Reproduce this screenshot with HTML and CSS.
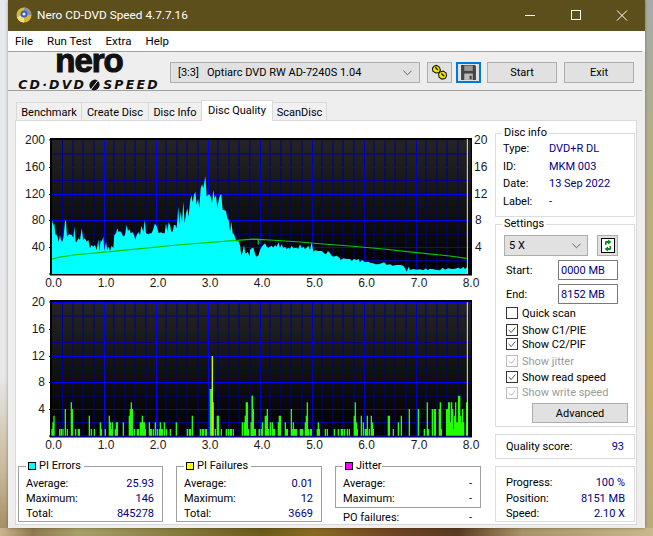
FILE: index.html
```html
<!DOCTYPE html>
<html lang="en">
<head>
<meta charset="utf-8">
<title>Nero CD-DVD Speed 4.7.7.16</title>
<link rel="stylesheet" href="styles.css">
</head>
<body>
<div class="window">
  <header class="titlebar">
    <svg class="app-icon" viewBox="0 0 16 16"><circle cx="8" cy="8" r="7.5" fill="#d8b83a"/><path d="M8 .5A7.5 7.5 0 0 1 15.5 8H8z" fill="#8a8fb0"/><path d="M1 10a7.5 7.5 0 0 0 7 5.500V8z" fill="#f0e080"/><circle cx="8" cy="7" r="3.500" fill="#3a62b0"/><circle cx="8" cy="7" r="1.500" fill="#e8e8e8"/></svg>
    <span class="title-text">Nero CD-DVD Speed 4.7.7.16</span>
    <div class="win-controls">
      <svg class="win-btn" viewBox="0 0 46 31"><path d="M18 15.500h10" stroke="#fff" fill="none"/></svg>
      <svg class="win-btn" viewBox="0 0 46 31"><rect x="18.500" y="10.500" width="9" height="9" stroke="#fff" fill="none"/></svg>
      <svg class="win-btn" viewBox="0 0 46 31"><path d="M18 10.500l10 10M28 10.500l-10 10" stroke="#fff" fill="none"/></svg>
    </div>
  </header>
  <nav class="menubar"><span>File</span><span>Run Test</span><span>Extra</span><span>Help</span></nav>
  <div class="toolbar">
    <div class="logo">
      <div class="logo-nero">nero</div>
      <div class="logo-speed"><span>CD·DVD</span><svg class="swoosh" viewBox="0 0 15 12"><ellipse cx="7.500" cy="6" rx="5" ry="5.500" transform="rotate(28 7.500 6)" fill="#111"/><path d="M4 10.500L11 1.500" stroke="#eee" stroke-width="1"/></svg><span>SPEED</span></div>
    </div>
    <div class="combo drive"><span class="combo-text">[3:3]&nbsp;&nbsp;&nbsp;Optiarc DVD RW AD-7240S 1.04</span><svg class="chev" viewBox="0 0 10 6"><path d="M.5.5L5 5 9.500.5" fill="none" stroke="#555"/></svg></div>
    <button class="btn icon-btn"><svg viewBox="0 0 18 18" class="ico"><g fill="#f2e600" stroke="#111" stroke-width="1.100"><path d="M3 2.500l3-1 3 2 1 3-1.500 2.500-3.500.5-3-2-.5-3z"/><path d="M9.500 8.500l3.500-1 3 2 .5 3-1.500 3-3.500.5-3-2-.5-3.500z"/></g><path d="M4.500 3.500l3 3M11 10l3 3" stroke="#111" stroke-width="1.400"/></svg></button>
    <button class="btn icon-btn focus"><svg viewBox="0 0 16 16" class="ico"><path d="M1 1h13l1 1v13H1z" fill="#444"/><rect x="4" y="1.500" width="8" height="5" fill="#999"/><rect x="4" y="9" width="8" height="6" fill="#bbb"/><rect x="9" y="11" width="2" height="3.500" fill="#444"/></svg></button>
    <button class="btn text-btn">Start</button>
    <button class="btn text-btn exit">Exit</button>
  </div>
  <div class="tabs">
    <span class="tab t1">Benchmark</span><span class="tab t2">Create Disc</span><span class="tab t3">Disc Info</span><span class="tab active">Disc Quality</span><span class="tab t5">ScanDisc</span>
  </div>
  <main class="panel">
    <section class="left">
      <svg class="chart first" viewBox="18 130 477 162">
        <defs>
          <linearGradient id="plotbg" x1="0" y1="0" x2="0" y2="1"><stop offset="0" stop-color="#242424"/><stop offset="1" stop-color="#000"/></linearGradient>
          <g id="plot">
            <rect x="50" y="138" width="422" height="137.500" fill="#000"/>
            <rect x="52" y="140" width="419" height="134" fill="url(#plotbg)"/>
            <path class="gminor" d="M62.500 140V274M73 140V274M83 140V274M94 140V274M114 140V274M125 140V274M135 140V274M146 140V274M166 140V274M177 140V274M187 140V274M198 140V274M218 140V274M229 140V274M239 140V274M250 140V274M270 140V274M281 140V274M291 140V274M302 140V274M322 140V274M333 140V274M343 140V274M354 140V274M374 140V274M385 140V274M395 140V274M406 140V274M426 140V274M437 140V274M447 140V274M458 140V274M52 154H469M52 180.500H469M52 207.500H469M52 234H469M52 260.500H469"/>
            <path class="gmid" d="M260.500 140V274M312.500 140V274M364.500 140V274M416.500 140V274"/>
            <path class="gmajor" d="M104.500 140V274M156.500 140V274M208.500 140V274M52 167.500H469M52 194.500H469M52 220.500H469M52 247.500H469"/>
            <path class="ticks" d="M49 140h3M49 167.500h3M49 194.500h3M49 220.500h3M49 247.500h3M49 274h3"/>
          </g>
        </defs>
        <use href="#plot"/>
        <g transform="matrix(.33333 0 0 .33333 10 125)">
          <path class="cyan" d="M126 447V285L130 300 133 297 136 328 140 330 143 335 146 352 150 330 153 345 157 350 160 340 165 290 168 285 171 335 175 330 178 328 185 330 190 338 193 305 197 350 200 352 205 340 210 345 215 310 220 345 225 340 230 350 235 345 240 370 245 360 250 365 255 360 260 375 265 342 268 380 272 345 275 350 280 335 283 378 288 350 292 375 296 365 300 378 305 362 310 370 313 330 318 325 322 310 326 322 330 318 335 325 340 335 345 330 350 300 354 318 358 312 362 325 368 322 372 330 376 345 380 330 385 322 390 330 394 302 400 320 404 285 408 325 415 328 420 325 425 325 430 312 434 297 438 300 442 310 446 325 452 322 458 325 464 325 468 295 472 320 476 292 480 300 484 320 488 320 492 300 496 300 500 310 505 245 508 300 512 260 516 290 520 230 524 295 528 265 532 250 536 275 540 230 544 210 548 232 552 210 556 200 560 240 564 220 568 250 572 192 576 178 580 190 586 153 590 215 594 210 598 208 602 215 606 235 610 195 614 220 618 210 622 250 626 225 630 210 634 208 638 255 642 255 648 258 652 280 656 285 660 320 664 290 668 325 672 328 676 340 680 350 684 345 690 360 694 392 698 380 702 360 706 385 710 385 714 380 718 395 722 378 726 380 730 370 734 385 738 395 742 398 746 392 750 392V447Z"/>
          <path class="speed" d="M126 402L145 397 190 390 300 380 400 370 500 360 600 352 680 346 720 343 745 343V358M745 343H750"/>
        </g>
        <g transform="matrix(.33333 0 0 .33333 250 125)">
          <path class="cyan" d="M0 447V375L5 370 10 368 14 385 18 395 25 392 30 375 35 365 40 360 45 355 50 365 55 368 60 365 65 362 70 368 75 360 80 365 85 352 90 368 95 358 100 370 105 365 110 372 115 368 120 372 125 362 130 370 140 368 145 372 150 358 155 370 160 365 165 372 170 368 175 362 180 375 185 350 190 380 195 376 205 378 215 378 222 385 228 388 234 378 240 385 245 392 250 395 260 392 268 398 272 405 280 400 290 402 300 402 305 408 312 402 320 405 326 402 330 412 336 405 345 412 355 410 362 414 370 415 376 418 385 418 395 415 402 412 410 420 420 418 428 422 440 420 450 420 460 422 466 432 470 440 476 425 480 435 490 432 500 434 510 433 520 436 528 430 532 436 540 431 550 433 560 435 570 436 578 428 585 434 595 430 605 432 615 431 625 428 632 432 640 426 645 432 652 426V447Z"/>
          <path class="speed" d="M0 343H25V358M25 343L60 345 150 351 220 357 300 363 400 372 500 383 600 393 650 400"/>
          <path class="cursor" d="M652 42V447"/>
        </g>
        <g class="axis end">
          <text x="45" y="143.500">200</text><text x="45" y="170.500">160</text><text x="45" y="197.500">120</text><text x="45" y="223.500">80</text><text x="45" y="250.500">40</text>
        </g>
        <g class="axis">
          <text x="474" y="143.500">20</text><text x="474" y="170.500">16</text><text x="474" y="197.500">12</text><text x="475" y="223.500">8</text><text x="475" y="250.500">4</text>
        </g>
        <g class="axis mid">
          <text x="53.500" y="287">0.0</text><text x="106" y="287">1.0</text><text x="158" y="287">2.0</text><text x="210" y="287">3.0</text><text x="262" y="287">4.0</text><text x="314.500" y="287">5.0</text><text x="366.500" y="287">6.0</text><text x="419" y="287">7.0</text><text x="471" y="287">8.0</text>
        </g>
      </svg>
      <svg class="chart" viewBox="18 292 477 162">
        <use href="#plot" transform="translate(0 162)"/>
        <path class="gmajor" d="M52 302.500H469M52 436H469"/>
        <g transform="matrix(.33333 0 0 .33333 10 290)">
          <path class="bars" d="M126 437v-20M129 437v-40M132 437v-60M149 437v-20M154 437v-20M159 437v-20M166 437v-80M172 437v-20M184 437v-100M187 437v-80M197 437v-20M205 437v-20M208 437v-20M238 437v-60M244 437v-20M253 437v-20M271 437v-40M274 437v-20M286 437v-20M298 437v-60M301 437v-40M304 437v-20M307 437v-40M316 437v-20M319 437v-40M322 437v-40M340 437v-40M358 437v-60M361 437v-80M364 437v-100M367 437v-80M373 437v-20M382 437v-20M385 437v-20M391 437v-40M394 437v-40M397 437v-60M400 437v-40M403 437v-40M406 437v-20M418 437v-40M421 437v-20M424 437v-20M430 437v-20M436 437v-40M442 437v-20M448 437v-20M451 437v-40M454 437v-20M457 437v-20M463 437v-40M469 437v-20M481 437v-20M499 437v-40M532 437v-20M538 437v-20M541 437v-20M547 437v-60M571 437v-20M577 437v-20M580 437v-20M586 437v-20M589 437v-20M601 437v-140M604 437v-140M610 437v-100M616 437v-20M622 437v-60M625 437v-60M634 437v-20M649 437v-20M655 437v-20M661 437v-20M664 437v-20M670 437v-20M697 437v-40M703 437v-40M706 437v-60M709 437v-100M712 437v-100M715 437v-20M724 437v-40M727 437v-120M730 437v-80M736 437v-20M748 437v-20"/>
          <path class="bars tall" d="M607 437V198"/>
        </g>
        <g transform="matrix(.33333 0 0 .33333 250 290)">
          <path class="bars" d="M4 437v-40M7 437v-120M10 437v-80M13 437v-20M28 437v-20M34 437v-20M37 437v-40M46 437v-60M49 437v-60M52 437v-80M55 437v-20M61 437v-40M67 437v-40M70 437v-20M73 437v-20M85 437v-40M88 437v-60M91 437v-60M106 437v-40M109 437v-20M112 437v-20M124 437v-80M127 437v-20M130 437v-40M133 437v-20M136 437v-20M139 437v-20M151 437v-20M154 437v-20M157 437v-20M166 437v-40M169 437v-60M172 437v-100M175 437v-20M181 437v-20M184 437v-20M202 437v-20M205 437v-40M208 437v-20M226 437v-20M232 437v-20M253 437v-20M265 437v-20M274 437v-20M277 437v-20M283 437v-20M292 437v-20M298 437v-20M313 437v-60M316 437v-100M319 437v-40M322 437v-20M334 437v-60M340 437v-40M346 437v-20M349 437v-20M352 437v-60M358 437v-20M364 437v-60M367 437v-40M370 437v-20M415 437v-60M418 437v-60M430 437v-20M445 437v-40M454 437v-60M478 437v-80M505 437v-80M523 437v-20M532 437v-100M535 437v-20M547 437v-80M553 437v-80M556 437v-80M568 437v-80M571 437v-100M574 437v-20M590 437v-80M593 437v-80M596 437v-100M599 437v-100M602 437v-40M605 437v-100M608 437v-80M611 437v-20M614 437v-60M617 437v-100M620 437v-40M623 437v-40M626 437v-120M629 437v-120M632 437v-60M635 437v-40M638 437v-80M641 437v-40M650 437v-100"/>
          <path class="cursor" d="M652 36V437"/>
        </g>
        <g class="axis end">
          <text x="45" y="305.500">20</text><text x="45" y="333">16</text><text x="45" y="359.500">12</text><text x="45" y="385.500">8</text><text x="45" y="412.500">4</text>
        </g>
        <g class="axis mid">
          <text x="53.500" y="449">0.0</text><text x="106" y="449">1.0</text><text x="158" y="449">2.0</text><text x="210" y="449">3.0</text><text x="262" y="449">4.0</text><text x="314.500" y="449">5.0</text><text x="366.500" y="449">6.0</text><text x="419" y="449">7.0</text><text x="471" y="449">8.0</text>
        </g>
      </svg>
      <div class="stats">
        <div class="stat-col">
          <fieldset class="stat">
            <legend><i class="swatch cyan-sw"></i>PI Errors</legend>
            <div class="row"><span>Average:</span><b>25.93</b></div>
            <div class="row"><span>Maximum:</span><b>146</b></div>
            <div class="row"><span>Total:</span><b>845278</b></div>
          </fieldset>
        </div>
        <div class="stat-col">
          <fieldset class="stat">
            <legend><i class="swatch yellow-sw"></i>PI Failures</legend>
            <div class="row"><span>Average:</span><b>0.01</b></div>
            <div class="row"><span>Maximum:</span><b>12</b></div>
            <div class="row"><span>Total:</span><b>3669</b></div>
          </fieldset>
        </div>
        <div class="stat-col">
          <fieldset class="stat jitter">
            <legend><i class="swatch magenta-sw"></i>Jitter</legend>
            <div class="row"><span>Average:</span><b>-</b></div>
            <div class="row"><span>Maximum:</span><b>-</b></div>
          </fieldset>
          <div class="row po"><span>PO failures:</span><b>-</b></div>
        </div>
      </div>
    </section>
    <aside class="side">
      <fieldset class="group info">
        <legend>Disc info</legend>
        <div class="info-row"><span>Type:</span><b>DVD+R DL</b></div>
        <div class="info-row"><span>ID:</span><b>MKM 003</b></div>
        <div class="info-row"><span>Date:</span><b>13 Sep 2022</b></div>
        <div class="info-row"><span>Label:</span><b>-</b></div>
      </fieldset>
      <fieldset class="group settings">
        <legend>Settings</legend>
        <div class="speed-row">
          <div class="combo small"><span class="combo-text">5 X</span><svg class="chev" viewBox="0 0 10 6"><path d="M.5.5L5 5 9.500.5" fill="none" stroke="#555"/></svg></div>
          <button class="btn refresh"><svg viewBox="0 0 14 15" class="ref-ico"><rect x=".5" y=".5" width="13" height="14" fill="#fff" stroke="#000"/><path d="M4 7V4.500c0-1 .5-1.500 1.500-1.500H7V1.500L10.500 4 7 6.500V5H5.500v2zM10 8v2.500c0 1-.5 1.500-1.500 1.500H7v1.500L3.500 11 7 8.500V10h1.500V8z" fill="#0a8a1e"/></svg></button>
        </div>
        <label class="field first-field"><span>Start:</span><input value="0000 MB"></label>
        <label class="field"><span>End:</span><input value="8152 MB"></label>
        <div class="check quick"><i class="box"></i><span>Quick scan</span></div>
        <div class="check tight c1"><i class="box on"><svg viewBox="0 0 12 12"><path d="M2 6l3 3 5-6" fill="none" stroke="#333"/></svg></i><span>Show C1/PIE</span></div>
        <div class="check tight"><i class="box on"><svg viewBox="0 0 12 12"><path d="M2 6l3 3 5-6" fill="none" stroke="#333"/></svg></i><span>Show C2/PIF</span></div>
        <div class="check dis c3"><i class="box on"><svg viewBox="0 0 12 12"><path d="M2 6l3 3 5-6" fill="none" stroke="#aaa"/></svg></i><span>Show jitter</span></div>
        <div class="check"><i class="box on"><svg viewBox="0 0 12 12"><path d="M2 6l3 3 5-6" fill="none" stroke="#333"/></svg></i><span>Show read speed</span></div>
        <div class="check dis w"><i class="box on"><svg viewBox="0 0 12 12"><path d="M2 6l3 3 5-6" fill="none" stroke="#aaa"/></svg></i><span>Show write speed</span></div>
        <button class="btn advanced">Advanced</button>
      </fieldset>
      <div class="box-panel quality"><span>Quality score:</span><b>93</b></div>
      <div class="box-panel progress">
        <div class="prow"><span>Progress:</span><b>100 %</b></div>
        <div class="prow"><span>Position:</span><b>8151 MB</b></div>
        <div class="prow"><span>Speed:</span><b>2.10 X</b></div>
      </div>
    </aside>
  </main>
</div>
</body>
</html>
```
FILE: styles.css
```css
* { box-sizing: border-box; }
html, body { margin: 0; padding: 0; height: 536px; overflow: hidden; }
body {
  width: 653px;
  font: 11px/15px Roboto, "Liberation Sans", sans-serif;
  color: #000;
  background:
    linear-gradient(90deg, #c9b48f 0, #8f7a50 5%, #a8a068 12%, #6b5a18 40%, #8a6a20 48%, #6e4422 60%, #5a3a20 70%, #a89468 80%, #c8b88c 100%) bottom / 100% 8px no-repeat,
    linear-gradient(180deg, #e6e8ee 0, #e8e8e8 70%, #c9b89a 88%, #a08a60 100%) left / 8px 100% no-repeat,
    linear-gradient(180deg, #a4aca6 0, #b3ae84 30%, #c4ae72 70%, #b8aa80 100%) right / 8px 100% no-repeat,
    #ccc;
}
.window { width: 637px; height: 528px; margin-left: 8px; background: #eeeeee; display: flex; flex-direction: column; box-shadow: 0 0 3px rgba(0,0,0,.35); }

.titlebar { height: 31px; flex: none; background: #5d4f1c; display: flex; align-items: center; padding-left: 8px; color: #fff; font-size: 11.800px; }
.app-icon { width: 16px; height: 16px; flex: none; margin-top: -1px; }
.title-text { margin-left: 5px; flex: 1; margin-top: -1px; }
.win-controls { display: flex; }
.win-btn { width: 46px; height: 31px; display: block; }

.menubar { height: 20px; flex: none; background: #fff; display: flex; align-items: center; gap: 14px; padding-left: 7px; font-size: 11.500px; }
.toolbar { height: 40px; flex: none; margin-right: 3px; padding-top: 3px; border-top: 1px solid #a0a0a0; border-bottom: 1px solid #a0a0a0; display: flex; align-items: center; }
.logo { width: 162px; flex: none; height: 38px; display: flex; flex-direction: column; align-items: center; }
.logo-nero { font: bold 33px/20px "Liberation Sans", sans-serif; letter-spacing: -1px; color: #111; -webkit-text-stroke: 1.100px #111; height: 27.500px; margin-top: -2.500px; }
.logo-speed { display: flex; align-items: center; font: italic bold 12.500px/12px "DejaVu Sans", sans-serif; letter-spacing: 2.200px; color: #111; white-space: nowrap; }
.swoosh { width: 15px; height: 12px; margin: 0 1px; }

.combo { background: #e1e1e1; border: 1px solid #adadad; display: flex; align-items: center; justify-content: space-between; }
.combo.drive { width: 250px; height: 21px; padding: 0 7px 0 7px; }
.combo-text { white-space: nowrap; }
.chev { width: 9px; height: 6px; flex: none; }
.btn { font: inherit; color: #000; background: #e1e1e1; border: 1px solid #adadad; padding: 0; display: flex; align-items: center; justify-content: center; border-radius: 0; }
.icon-btn { width: 25px; height: 21px; margin-left: 7px; }
.icon-btn.focus { margin-left: 4px; border: 2px solid #0078d7; }
.ico { width: 17px; height: 17px; }
.text-btn { width: 70px; height: 21px; margin-left: 6px; }
.text-btn.exit { margin-left: 7px; }

.tabs { height: 29px; flex: none; padding: 9px 0 0 8px; display: flex; align-items: flex-end; }
.tab { height: 18px; padding-top: 1px; background: #f0f0f0; border: 1px solid #d9d9d9; border-bottom: 0; margin-left: -1px; display: flex; align-items: center; justify-content: center; white-space: nowrap; }
.t1 { width: 66px; margin-left: 0; }
.t2 { width: 68px; }
.t3 { width: 54px; }
.t5 { width: 55px; }
.tab.active { width: 72px; height: 21px; background: #fff; margin-bottom: -1px; position: relative; z-index: 1; padding: 0 0 2px; }

.panel { width: 622px; height: 405px; margin-left: 7px; flex: none; background: #fff; border: 1px solid #d9d9d9; display: flex; }
.left { width: 479px; flex: none; }
.chart { display: block; width: 477px; height: 162px; margin-left: 2px; }
.chart.first { margin-top: 9px; }
.gminor { stroke: #00008c; stroke-width: 1; fill: none; }
.gmid { stroke: #0000c4; stroke-width: 1; fill: none; }
.gmajor { stroke: #0000ff; stroke-width: 1; fill: none; }
.ticks { stroke: #000; stroke-width: 1; fill: none; }
.cyan { fill: #00ffff; }
.speed { fill: none; stroke: #00c800; stroke-width: 3.500; }
.cursor { stroke: #e8e8e8; stroke-width: 3; fill: none; }
.bars { stroke: #22ff00; stroke-width: 4; fill: none; }
.bars.tall { stroke: #c8ff00; }
.axis text { font: 12px "Liberation Sans", sans-serif; fill: #1a1a1a; }
.axis.end text { text-anchor: end; }
.axis.mid text { text-anchor: middle; }

fieldset { margin: 0; min-width: 0; }
legend { padding: 0; height: 14px; line-height: 14px; display: flex; align-items: center; white-space: nowrap; }

.stats { display: flex; gap: 13px; margin: 5px 0 0 2px; }
.stat-col { width: 146px; }
.stat-col:first-child { width: 145px; }
.stat { height: 63px; border: 1px solid #a0a0a0; padding: 3px 8px 0 7px; }
.stat legend { padding-right: 3px; }
.stat.jitter { height: 49px; }
.stat.jitter legend { padding-right: 0; }
.swatch { width: 8px; height: 8px; border: 1px solid #000; margin: 0 3px 0 2px; display: block; flex: none; }
.cyan-sw { background: #00ffff; }
.yellow-sw { background: #ffff00; }
.magenta-sw { background: #ff00ff; }
.row { height: 15px; display: flex; justify-content: space-between; }
b { font-weight: 400; color: #00007f; }
.row.po { height: 16px; margin-top: 2px; padding: 0 9px 0 8px; }

.side { width: 140px; flex: none; margin-top: 5px; }
.group { border: 1px solid #dcdcdc; padding: 0 8px 0 8px; }
.group legend { margin-left: -2px; padding: 0 2px; }
.group.info { height: 91px; padding-left: 7px; }
.group.info legend { margin-left: -1px; }
.info-row { height: 17.500px; display: flex; align-items: center; }
.info-row span { width: 46px; flex: none; }
.settings { height: 210px; padding-top: 4px; }
.speed-row { display: flex; gap: 9px; }
.combo.small { width: 84px; height: 21px; padding: 0 6px 0 4px; }
.refresh { width: 21px; height: 21px; }
.ref-ico { width: 14px; height: 15px; }
.field { display: flex; align-items: center; justify-content: space-between; height: 20px; padding: 0 8px 0 2px; }
.first-field { margin-top: 4px; margin-bottom: 4px; }
.field input { width: 60px; height: 20px; font: inherit; color: #00007f; border: 1px solid #7a7a7a; padding: 0 2px; background: #fff; border-radius: 0; }
.check { height: 16px; display: flex; align-items: center; padding-left: 2px; }
.check .box { width: 12px; height: 12px; border: 1px solid #333; display: block; flex: none; margin-right: 4px; background: #fff; }
.box svg { width: 10px; height: 10px; display: block; }
.check.quick { margin-top: 1px; }
.check.tight { height: 14px; }
.check.c1 { margin-top: 2px; }
.check.c3 { margin-top: 2px; }
.check.dis { color: #9a9a9a; }
.check.dis .box { border-color: #bdbdbd; }
.check.w { height: 15px; }
.advanced { width: 96px; height: 20px; margin: 3px 0 0 28px; }

.box-panel { border: 1px solid #dcdcdc; width: 140px; }
.quality { height: 25px; margin-top: 7px; display: flex; align-items: center; justify-content: space-between; padding: 0 10px 0 10px; }
.progress { height: 56px; margin-top: 7px; padding: 8px 9px 0 10px; }
.prow { height: 15.500px; display: flex; align-items: center; justify-content: space-between; }
```
